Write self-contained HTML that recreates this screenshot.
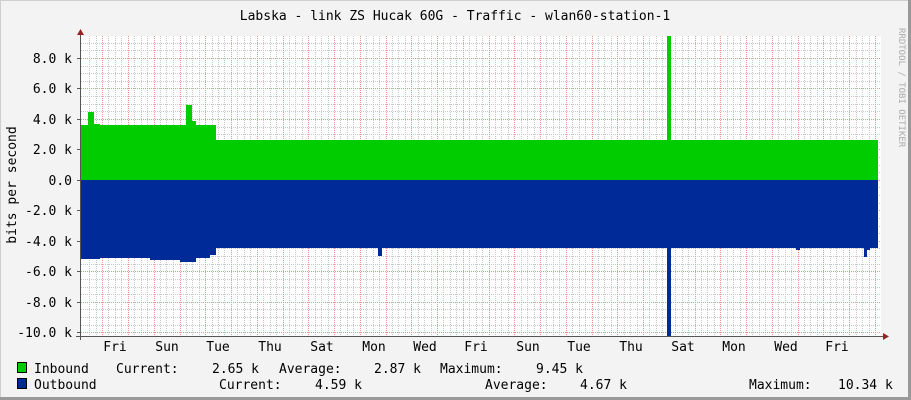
<!DOCTYPE html>
<html><head><meta charset="utf-8"><style>
html,body{margin:0;padding:0;background:#f3f3f3}
svg{display:block}
text{font-family:"DejaVu Sans Mono","Liberation Mono",monospace;fill:#000}
</style></head><body>
<svg width="911" height="400" viewBox="0 0 911 400" xmlns="http://www.w3.org/2000/svg">
<rect x="0" y="0" width="911" height="400" fill="#f3f3f3"/>
<line x1="0" y1="0.5" x2="911" y2="0.5" stroke="#cfcfcf"/>
<line x1="0.5" y1="0" x2="0.5" y2="400" stroke="#cfcfcf"/>
<line x1="0" y1="398.5" x2="911" y2="398.5" stroke="#999" stroke-width="3"/>
<line x1="909.5" y1="0" x2="909.5" y2="400" stroke="#999" stroke-width="3"/>
<rect x="81" y="36" width="800" height="300" fill="#fff"/>
<g stroke="#c8c8c8" stroke-dasharray="1,1" shape-rendering="crispEdges">
<path d="M81 43.5H881M81 50.5H881M81 66.5H881M81 73.5H881M81 81.5H881M81 96.5H881M81 104.5H881M81 111.5H881M81 127.5H881M81 134.5H881M81 142.5H881M81 157.5H881M81 165.5H881M81 172.5H881M81 187.5H881M81 195.5H881M81 203.5H881M81 218.5H881M81 226.5H881M81 233.5H881M81 248.5H881M81 256.5H881M81 264.5H881M81 279.5H881M81 287.5H881M81 294.5H881M81 309.5H881M81 317.5H881M81 325.5H881"/>
<path d="M89.5 36V336M96.5 36V336M108.5 36V336M115.5 36V336M121.5 36V336M134.5 36V336M141.5 36V336M147.5 36V336M160.5 36V336M166.5 36V336M173.5 36V336M186.5 36V336M192.5 36V336M199.5 36V336M212.5 36V336M218.5 36V336M224.5 36V336M237.5 36V336M244.5 36V336M250.5 36V336M263.5 36V336M270.5 36V336M276.5 36V336M289.5 36V336M295.5 36V336M302.5 36V336M315.5 36V336M321.5 36V336M328.5 36V336M340.5 36V336M347.5 36V336M353.5 36V336M366.5 36V336M373.5 36V336M379.5 36V336M392.5 36V336M398.5 36V336M405.5 36V336M418.5 36V336M424.5 36V336M431.5 36V336M443.5 36V336M450.5 36V336M456.5 36V336M469.5 36V336M476.5 36V336M482.5 36V336M495.5 36V336M501.5 36V336M508.5 36V336M521.5 36V336M527.5 36V336M534.5 36V336M546.5 36V336M553.5 36V336M559.5 36V336M572.5 36V336M579.5 36V336M585.5 36V336M598.5 36V336M604.5 36V336M611.5 36V336M624.5 36V336M630.5 36V336M637.5 36V336M649.5 36V336M656.5 36V336M662.5 36V336M675.5 36V336M682.5 36V336M688.5 36V336M701.5 36V336M707.5 36V336M714.5 36V336M727.5 36V336M733.5 36V336M740.5 36V336M752.5 36V336M759.5 36V336M765.5 36V336M778.5 36V336M785.5 36V336M791.5 36V336M804.5 36V336M810.5 36V336M817.5 36V336M830.5 36V336M836.5 36V336M843.5 36V336M856.5 36V336M862.5 36V336M869.5 36V336"/>
</g>
<g stroke="#ec9090" stroke-dasharray="1,1" shape-rendering="crispEdges">
<path d="M81 58.5H881M81 88.5H881M81 119.5H881M81 149.5H881M81 180.5H881M81 210.5H881M81 241.5H881M81 271.5H881M81 302.5H881M81 332.5H881"/>
<path d="M102.5 36V336M128.5 36V336M154.5 36V336M180.5 36V336M205.5 36V336M231.5 36V336M257.5 36V336M283.5 36V336M308.5 36V336M334.5 36V336M360.5 36V336M386.5 36V336M411.5 36V336M437.5 36V336M463.5 36V336M489.5 36V336M514.5 36V336M540.5 36V336M566.5 36V336M592.5 36V336M617.5 36V336M643.5 36V336M669.5 36V336M695.5 36V336M720.5 36V336M746.5 36V336M772.5 36V336M798.5 36V336M823.5 36V336M849.5 36V336M875.5 36V336"/>
</g>
<polygon fill="#00cc00" points="81,180 81,125 88,125 88,112 94,112 94,124 100,124 100,125 186,125 186,105 192,105 192,121 196,121 196,125 216,125 216,140 667,140 667,36 671,36 671,140 878,140 878,180"/>
<polygon fill="#002a97" points="81,180 81,259 100,259 100,258 150,258 150,260 180,260 180,262 196,262 196,258 210,258 210,255 216,255 216,248 378,248 378,256 382,256 382,248 667,248 667,336 671,336 671,248 796,248 796,250 800,250 800,248 864,248 864,257 867,257 867,250 870,250 870,248 878,248 878,180"/>
<line x1="80.5" y1="32" x2="80.5" y2="340" stroke="#555"/>
<line x1="76" y1="336.5" x2="886" y2="336.5" stroke="#555"/>
<polygon points="77,35 84,35 80.5,29" fill="#992222"/>
<polygon points="883,333 883,340 889,336.5" fill="#992222"/>
<g stroke="#555"><path d="M77 58.5H81M77 88.5H81M77 119.5H81M77 149.5H81M77 180.5H81M77 210.5H81M77 241.5H81M77 271.5H81M77 302.5H81M77 332.5H81"/></g>
<g font-size="13" text-anchor="end">
<text x="72" y="63">8.0 k</text><text x="72" y="93">6.0 k</text><text x="72" y="124">4.0 k</text><text x="72" y="154">2.0 k</text><text x="72" y="185">0.0</text><text x="72" y="215">-2.0 k</text><text x="72" y="246">-4.0 k</text><text x="72" y="276">-6.0 k</text><text x="72" y="307">-8.0 k</text><text x="72" y="337">-10.0 k</text>
</g>
<text x="455" y="20" font-size="13" text-anchor="middle">Labska - link ZS Hucak 60G - Traffic - wlan60-station-1</text>
<text transform="translate(16,185) rotate(-90)" font-size="13" text-anchor="middle">bits per second</text>
<text transform="translate(899,28) rotate(90)" font-size="9" style="fill:#aaa">RRDTOOL / TOBI OETIKER</text>
<g font-size="13" text-anchor="middle">
<text x="115" y="351">Fri</text><text x="167" y="351">Sun</text><text x="218" y="351">Tue</text><text x="270" y="351">Thu</text><text x="322" y="351">Sat</text><text x="374" y="351">Mon</text><text x="425" y="351">Wed</text><text x="476" y="351">Fri</text><text x="528" y="351">Sun</text><text x="579" y="351">Tue</text><text x="631" y="351">Thu</text><text x="683" y="351">Sat</text><text x="734" y="351">Mon</text><text x="786" y="351">Wed</text><text x="837" y="351">Fri</text>
</g>
<rect x="17.5" y="362.5" width="9" height="10" fill="#00cc00" stroke="#000"/>
<rect x="17.5" y="378.5" width="9" height="10" fill="#002a97" stroke="#000"/>
<g font-size="13">
<text x="34" y="373">Inbound</text><text x="116" y="373">Current:</text><text x="212" y="373">2.65 k</text><text x="279" y="373">Average:</text><text x="374" y="373">2.87 k</text><text x="440" y="373">Maximum:</text><text x="536" y="373">9.45 k</text>
<text x="34" y="389">Outbound</text><text x="219" y="389">Current:</text><text x="315" y="389">4.59 k</text><text x="485" y="389">Average:</text><text x="580" y="389">4.67 k</text><text x="749" y="389">Maximum:</text><text x="838" y="389">10.34 k</text>
</g>
</svg>
</body></html>
